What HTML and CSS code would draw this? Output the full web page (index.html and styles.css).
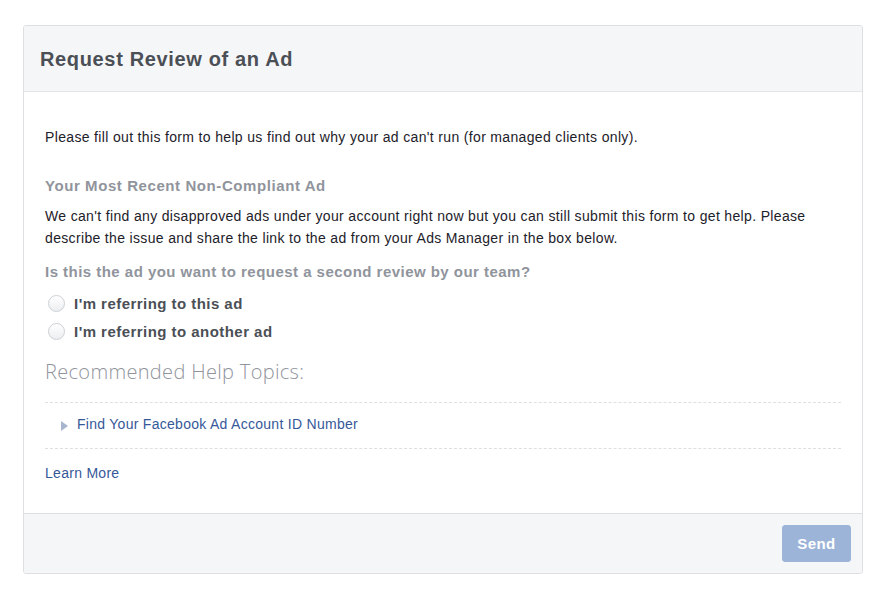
FILE: index.html
```html
<!DOCTYPE html>
<html>
<head>
<meta charset="utf-8">
<link rel="stylesheet" href="styles.css">
</head>
<body>
<div class="card">
  <div class="card-header"><h1 class="title">Request Review of an Ad</h1></div>
  <div class="card-body">
    <p class="intro">Please fill out this form to help us find out why your ad can't run (for managed clients only).</p>
    <h2 class="section">Your Most Recent Non-Compliant Ad</h2>
    <p class="desc">We can't find any disapproved ads under your account right now but you can still submit this form to get help. Please describe the issue and share the link to the ad from your Ads Manager in the box below.</p>
    <h3 class="question">Is this the ad you want to request a second review by our team?</h3>
    <label class="radio"><span class="circle"></span>I'm referring to this ad</label>
    <label class="radio"><span class="circle"></span>I'm referring to another ad</label>
    <h2 class="topics">Recommended Help Topics:</h2>
    <div class="topic-list">
      <div class="topic"><span class="tri"></span><a class="link">Find Your Facebook Ad Account ID Number</a></div>
    </div>
    <a class="link learn">Learn More</a>
  </div>
  <div class="card-footer"><button class="send">Send</button></div>
</div>
</body>
</html>
```
FILE: styles.css
```css
html, body { margin: 0; padding: 0; background: #fff; }
body { padding: 25px 24px 0 23px; font-family: "Liberation Sans", Arial, sans-serif; color: #1d2129; }
.card { border: 1px solid #dddfe2; border-radius: 3px; background: #fff; }
.card-header { background: #f5f6f7; border-bottom: 1px solid #e5e5e5; height: 65px; display: flex; align-items: center; padding-left: 16px; border-radius: 3px 3px 0 0; }
.title { margin: 0; font-size: 20px; font-weight: bold; color: #4b4f56; letter-spacing: 0.65px; position: relative; top: 1px; }
.card-body { padding: 36px 21px 31px 21px; }
.intro { margin: 0; font-size: 14px; line-height: 18px; letter-spacing: 0.34px; }
.section { margin: 31px 0 0; font-size: 15px; font-weight: bold; color: #90949c; line-height: 18px; letter-spacing: 0.58px; }
.desc { margin: 10px 0 0; font-size: 14px; line-height: 22px; letter-spacing: 0.34px; }
.question { margin: 14px 0 0; font-size: 15px; font-weight: bold; color: #90949c; line-height: 18px; letter-spacing: 0.47px; }
.radio { display: flex; align-items: center; font-size: 15px; font-weight: bold; color: #4b4f56; height: 28px; letter-spacing: 0.46px; }
.radio:first-of-type { margin-top: 8px; }
.circle { width: 17px; height: 17px; border: 1px solid #ccd0d5; border-radius: 50%; box-sizing: border-box; margin: 0 9px 0 3px; background: linear-gradient(#fff, #eceef1); }
.topics { margin: 13px 0 0; font-family: "Open Sans", sans-serif; font-weight: 300; font-size: 20px; color: #90949c; line-height: 28px; letter-spacing: 0.33px; }
.topic-list { margin-top: 16px; border-top: 1px dashed #dddfe2; border-bottom: 1px dashed #dddfe2; }
.topic { display: flex; align-items: center; height: 45px; padding-left: 16px; box-sizing: border-box; padding-bottom: 4px; }
.tri { width: 0; height: 0; border-left: 7px solid #a8b5ce; border-top: 5px solid transparent; border-bottom: 5px solid transparent; margin-right: 9px; margin-top: 5px; }
.link { color: #365899; font-size: 14px; letter-spacing: 0.28px; }
.learn { display: block; margin-top: 15px; line-height: 18px; }
.card-footer { background: #f5f6f7; border-top: 1px solid #dddfe2; height: 59px; display: flex; justify-content: flex-end; align-items: center; padding-right: 11px; border-radius: 0 0 3px 3px; }
.send { background: #9cb4d8; border: 1px solid #9cb4d8; color: #fff; font-family: "Liberation Sans", Arial, sans-serif; font-weight: bold; font-size: 15px; width: 69px; height: 37px; border-radius: 3px; padding: 0; letter-spacing: 0.4px; }
```
